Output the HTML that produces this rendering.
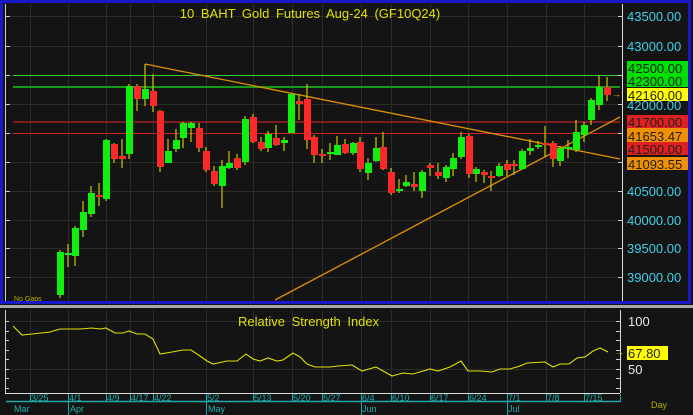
<!DOCTYPE html>
<html><head><meta charset="utf-8"><style>
html,body{margin:0;padding:0;background:#141414;}
svg{display:block;font-family:"Liberation Sans",sans-serif;}
</style></head><body>
<svg width="693" height="415" viewBox="0 0 693 415" xmlns="http://www.w3.org/2000/svg">
<rect width="693" height="415" fill="#141414"/>
<g stroke="#2c2c2c" stroke-width="1">
<line x1="8" y1="16.5" x2="620" y2="16.5"/><line x1="8" y1="46.5" x2="620" y2="46.5"/><line x1="8" y1="75.5" x2="620" y2="75.5"/><line x1="8" y1="104.5" x2="620" y2="104.5"/><line x1="8" y1="133.5" x2="620" y2="133.5"/><line x1="8" y1="162.5" x2="620" y2="162.5"/><line x1="8" y1="191.5" x2="620" y2="191.5"/><line x1="8" y1="220.5" x2="620" y2="220.5"/><line x1="8" y1="248.5" x2="620" y2="248.5"/><line x1="8" y1="277.5" x2="620" y2="277.5"/>
<line x1="30.5" y1="4" x2="30.5" y2="302"/><line x1="68.5" y1="4" x2="68.5" y2="302"/><line x1="106.5" y1="4" x2="106.5" y2="302"/><line x1="130.5" y1="4" x2="130.5" y2="302"/><line x1="153.5" y1="4" x2="153.5" y2="302"/><line x1="206.5" y1="4" x2="206.5" y2="302"/><line x1="253.5" y1="4" x2="253.5" y2="302"/><line x1="292.5" y1="4" x2="292.5" y2="302"/><line x1="322.5" y1="4" x2="322.5" y2="302"/><line x1="361.5" y1="4" x2="361.5" y2="302"/><line x1="391.5" y1="4" x2="391.5" y2="302"/><line x1="430.5" y1="4" x2="430.5" y2="302"/><line x1="468.5" y1="4" x2="468.5" y2="302"/><line x1="507.5" y1="4" x2="507.5" y2="302"/><line x1="546.5" y1="4" x2="546.5" y2="302"/><line x1="584.5" y1="4" x2="584.5" y2="302"/>
</g>
<g stroke="#2c2c2c"><line x1="30.5" y1="310" x2="30.5" y2="393"/><line x1="68.5" y1="310" x2="68.5" y2="393"/><line x1="106.5" y1="310" x2="106.5" y2="393"/><line x1="130.5" y1="310" x2="130.5" y2="393"/><line x1="153.5" y1="310" x2="153.5" y2="393"/><line x1="206.5" y1="310" x2="206.5" y2="393"/><line x1="253.5" y1="310" x2="253.5" y2="393"/><line x1="292.5" y1="310" x2="292.5" y2="393"/><line x1="322.5" y1="310" x2="322.5" y2="393"/><line x1="361.5" y1="310" x2="361.5" y2="393"/><line x1="391.5" y1="310" x2="391.5" y2="393"/><line x1="430.5" y1="310" x2="430.5" y2="393"/><line x1="468.5" y1="310" x2="468.5" y2="393"/><line x1="507.5" y1="310" x2="507.5" y2="393"/><line x1="546.5" y1="310" x2="546.5" y2="393"/><line x1="584.5" y1="310" x2="584.5" y2="393"/>
<line x1="6" y1="321.5" x2="620" y2="321.5"/><line x1="6" y1="369.5" x2="620" y2="369.5"/></g>

<line x1="13" y1="75.5" x2="620" y2="75.5" stroke="#30d030" stroke-width="1"/>
<line x1="13" y1="87" x2="620" y2="87" stroke="#189818" stroke-width="2"/>
<line x1="13" y1="122" x2="620" y2="122" stroke="#a02020" stroke-width="1.5"/>
<line x1="13" y1="133.5" x2="620" y2="133.5" stroke="#d02020" stroke-width="1"/>
<line x1="145" y1="64" x2="620" y2="159" stroke="#e09000" stroke-width="1.3"/>
<line x1="275" y1="300" x2="620" y2="117" stroke="#e09000" stroke-width="1.3"/>

<g stroke="#c8c800" stroke-width="1.2">
<line x1="60" y1="250" x2="60" y2="298"/><line x1="68" y1="244" x2="68" y2="267"/><line x1="75" y1="226" x2="75" y2="266"/><line x1="83" y1="201" x2="83" y2="237"/><line x1="91" y1="186" x2="91" y2="217"/><line x1="99" y1="183" x2="99" y2="206"/><line x1="106" y1="139" x2="106" y2="201"/><line x1="114" y1="143" x2="114" y2="163"/><line x1="122" y1="139" x2="122" y2="168"/><line x1="129" y1="84" x2="129" y2="159"/><line x1="137" y1="84" x2="137" y2="111"/><line x1="145" y1="64" x2="145" y2="106"/><line x1="153" y1="74" x2="153" y2="112"/><line x1="160" y1="110" x2="160" y2="172"/><line x1="168" y1="139" x2="168" y2="163"/><line x1="176" y1="129" x2="176" y2="152"/><line x1="183" y1="122" x2="183" y2="148"/><line x1="191" y1="122" x2="191" y2="142"/><line x1="199" y1="123" x2="199" y2="152"/><line x1="206" y1="147" x2="206" y2="172"/><line x1="214" y1="166" x2="214" y2="186"/><line x1="222" y1="160" x2="222" y2="208"/><line x1="229" y1="151" x2="229" y2="169"/><line x1="237" y1="154" x2="237" y2="170"/><line x1="245" y1="116" x2="245" y2="165"/><line x1="253" y1="114" x2="253" y2="143"/><line x1="261" y1="137" x2="261" y2="151"/><line x1="268" y1="131" x2="268" y2="152"/><line x1="276" y1="125" x2="276" y2="146"/><line x1="284" y1="137" x2="284" y2="151"/><line x1="291" y1="94" x2="291" y2="133"/><line x1="299" y1="94" x2="299" y2="120"/><line x1="307" y1="84" x2="307" y2="149"/><line x1="314" y1="135" x2="314" y2="163"/><line x1="322" y1="149" x2="322" y2="163"/><line x1="330" y1="143" x2="330" y2="160"/><line x1="337" y1="136" x2="337" y2="155"/><line x1="345" y1="139" x2="345" y2="154"/><line x1="353" y1="142" x2="353" y2="155"/><line x1="360" y1="137" x2="360" y2="172"/><line x1="368" y1="158" x2="368" y2="180"/><line x1="376" y1="137" x2="376" y2="162"/><line x1="383" y1="132" x2="383" y2="170"/><line x1="391" y1="168" x2="391" y2="195"/><line x1="399" y1="179" x2="399" y2="193"/><line x1="406" y1="175" x2="406" y2="187"/><line x1="414" y1="172" x2="414" y2="191"/><line x1="422" y1="170" x2="422" y2="198"/><line x1="430" y1="163" x2="430" y2="176"/><line x1="438" y1="163" x2="438" y2="179"/><line x1="446" y1="165" x2="446" y2="182"/><line x1="453" y1="153" x2="453" y2="176"/><line x1="461" y1="132" x2="461" y2="159"/><line x1="469" y1="134" x2="469" y2="178"/><line x1="476" y1="167" x2="476" y2="182"/><line x1="484" y1="170" x2="484" y2="183"/><line x1="491" y1="171" x2="491" y2="191"/><line x1="499" y1="163" x2="499" y2="177"/><line x1="507" y1="160" x2="507" y2="176"/><line x1="514" y1="160" x2="514" y2="175"/><line x1="522" y1="149" x2="522" y2="170"/><line x1="530" y1="139" x2="530" y2="155"/><line x1="538" y1="141" x2="538" y2="149"/><line x1="545" y1="126" x2="545" y2="157"/><line x1="553" y1="141" x2="553" y2="167"/><line x1="560" y1="146" x2="560" y2="166"/><line x1="568" y1="140" x2="568" y2="158"/><line x1="576" y1="120" x2="576" y2="152"/><line x1="584" y1="122" x2="584" y2="142"/><line x1="591" y1="98" x2="591" y2="125"/><line x1="599" y1="75" x2="599" y2="110"/><line x1="607" y1="77" x2="607" y2="101"/>
</g>
<g fill="#10f010">
<rect x="57" y="252" width="7" height="43"/><rect x="65" y="253" width="7" height="2"/><rect x="72" y="228" width="7" height="28"/><rect x="80" y="212" width="7" height="18"/><rect x="88" y="193" width="7" height="21"/><rect x="103" y="140" width="7" height="59"/><rect x="126" y="86" width="7" height="68"/><rect x="142" y="89" width="7" height="10"/><rect x="165" y="151" width="7" height="12"/><rect x="173" y="140" width="7" height="9"/><rect x="180" y="123" width="7" height="15"/><rect x="188" y="123" width="7" height="5"/><rect x="219" y="166" width="7" height="20"/><rect x="226" y="163" width="7" height="5"/><rect x="242" y="119" width="7" height="43"/><rect x="265" y="134" width="7" height="14"/><rect x="281" y="140" width="7" height="3"/><rect x="288" y="94" width="7" height="39"/><rect x="327" y="152" width="7" height="2"/><rect x="334" y="145" width="7" height="10"/><rect x="350" y="143" width="7" height="10"/><rect x="365" y="163" width="7" height="10"/><rect x="373" y="148" width="7" height="13"/><rect x="396" y="189" width="7" height="2"/><rect x="403" y="182" width="7" height="4"/><rect x="419" y="172" width="7" height="19"/><rect x="443" y="167" width="7" height="11"/><rect x="450" y="158" width="7" height="11"/><rect x="458" y="137" width="7" height="20"/><rect x="473" y="169" width="7" height="5"/><rect x="496" y="166" width="7" height="10"/><rect x="519" y="151" width="7" height="18"/><rect x="527" y="148" width="7" height="3"/><rect x="535" y="145" width="7" height="2"/><rect x="557" y="148" width="7" height="13"/><rect x="565" y="147" width="7" height="2"/><rect x="573" y="132" width="7" height="18"/><rect x="581" y="125" width="7" height="10"/><rect x="588" y="100" width="7" height="20"/><rect x="596" y="87" width="7" height="18"/>
</g>
<g fill="#ff2828">
<rect x="96" y="195" width="7" height="2"/><rect x="111" y="144" width="7" height="15"/><rect x="119" y="156" width="7" height="3"/><rect x="134" y="86" width="7" height="13"/><rect x="150" y="91" width="7" height="15"/><rect x="157" y="111" width="7" height="56"/><rect x="196" y="128" width="7" height="20"/><rect x="203" y="151" width="7" height="19"/><rect x="211" y="171" width="7" height="13"/><rect x="234" y="158" width="7" height="10"/><rect x="250" y="117" width="7" height="25"/><rect x="258" y="142" width="7" height="7"/><rect x="273" y="138" width="7" height="7"/><rect x="296" y="101" width="7" height="3"/><rect x="304" y="99" width="7" height="41"/><rect x="311" y="137" width="7" height="18"/><rect x="319" y="154" width="7" height="2"/><rect x="342" y="144" width="7" height="9"/><rect x="357" y="142" width="7" height="27"/><rect x="380" y="147" width="7" height="22"/><rect x="388" y="172" width="7" height="21"/><rect x="411" y="184" width="7" height="3"/><rect x="427" y="165" width="7" height="3"/><rect x="435" y="172" width="7" height="4"/><rect x="466" y="136" width="7" height="38"/><rect x="481" y="172" width="7" height="3"/><rect x="488" y="176" width="7" height="2"/><rect x="504" y="164" width="7" height="6"/><rect x="511" y="164" width="7" height="2"/><rect x="542" y="143" width="7" height="2"/><rect x="550" y="143" width="7" height="16"/><rect x="604" y="87" width="7" height="8"/>
</g>

<text x="310" y="18" fill="#e0e000" font-size="13" text-anchor="middle" word-spacing="3">10 BAHT Gold Futures Aug-24 (GF10Q24)</text>
<text x="14" y="301" fill="#b0b000" font-size="7">No Gaps</text>

<line x1="5.5" y1="4" x2="5.5" y2="302" stroke="#ccc"/>
<line x1="622.5" y1="4" x2="622.5" y2="302" stroke="#ddd"/>
<g stroke="#ccc">
<line x1="5" y1="16.5" x2="10" y2="16.5"/><line x1="5" y1="46.5" x2="10" y2="46.5"/><line x1="5" y1="75.5" x2="10" y2="75.5"/><line x1="5" y1="104.5" x2="10" y2="104.5"/><line x1="5" y1="133.5" x2="10" y2="133.5"/><line x1="5" y1="162.5" x2="10" y2="162.5"/><line x1="5" y1="191.5" x2="10" y2="191.5"/><line x1="5" y1="220.5" x2="10" y2="220.5"/><line x1="5" y1="248.5" x2="10" y2="248.5"/><line x1="5" y1="277.5" x2="10" y2="277.5"/>
<line x1="618" y1="16.5" x2="623" y2="16.5"/><line x1="618" y1="46.5" x2="623" y2="46.5"/><line x1="618" y1="75.5" x2="623" y2="75.5"/><line x1="618" y1="104.5" x2="623" y2="104.5"/><line x1="618" y1="133.5" x2="623" y2="133.5"/><line x1="618" y1="162.5" x2="623" y2="162.5"/><line x1="618" y1="191.5" x2="623" y2="191.5"/><line x1="618" y1="220.5" x2="623" y2="220.5"/><line x1="618" y1="248.5" x2="623" y2="248.5"/><line x1="618" y1="277.5" x2="623" y2="277.5"/>
</g>
<g font-size="13" fill="#40d0e8">
<text x="627" y="21">43500.00</text><text x="627" y="51">43000.00</text><text x="627" y="110">42000.00</text><text x="627" y="196">40500.00</text><text x="627" y="225">40000.00</text><text x="627" y="253">39500.00</text><text x="627" y="282">39000.00</text>
</g>
<rect x="627" y="61" width="61" height="13" fill="#00e000"/>
<rect x="627" y="74" width="61" height="13" fill="#00e000"/>
<rect x="627" y="88" width="61" height="13" fill="#ffff00"/>
<rect x="627" y="115" width="61" height="13" fill="#e02020"/>
<rect x="627" y="128" width="61" height="14" fill="#f09000"/>
<rect x="627" y="142" width="61" height="13" fill="#e02020"/>
<rect x="627" y="157" width="61" height="13" fill="#f09000"/>
<g font-size="13" fill="#202020">
<text x="628" y="73">42500.00</text><text x="628" y="86">42300.00</text><text x="628" y="100">42160.00</text><text x="628" y="127">41700.00</text><text x="628" y="141">41653.47</text><text x="628" y="154">41500.00</text><text x="628" y="169">41093.55</text>
</g>
<text x="612" y="97" fill="#e0c000" font-size="9">→</text>

<rect x="1.5" y="1.5" width="688" height="301" fill="none" stroke="#1818c8" stroke-width="3"/>
<rect x="0" y="305" width="693" height="3" fill="#a8a8a8"/>

<line x1="5.5" y1="310" x2="5.5" y2="393" stroke="#ccc"/>
<line x1="5" y1="393.5" x2="620" y2="393.5" stroke="#ddd"/>
<line x1="620.5" y1="310" x2="620.5" y2="393" stroke="#ddd"/>
<g stroke="#ccc"><line x1="5" y1="321.5" x2="9" y2="321.5"/><line x1="5" y1="331.5" x2="9" y2="331.5"/><line x1="5" y1="340.5" x2="9" y2="340.5"/><line x1="5" y1="350.5" x2="9" y2="350.5"/><line x1="5" y1="359.5" x2="9" y2="359.5"/><line x1="5" y1="369.5" x2="9" y2="369.5"/><line x1="5" y1="378.5" x2="9" y2="378.5"/><line x1="5" y1="388.5" x2="9" y2="388.5"/>
<line x1="616" y1="321.5" x2="620" y2="321.5"/><line x1="616" y1="331.5" x2="620" y2="331.5"/><line x1="616" y1="340.5" x2="620" y2="340.5"/><line x1="616" y1="350.5" x2="620" y2="350.5"/><line x1="616" y1="359.5" x2="620" y2="359.5"/><line x1="616" y1="369.5" x2="620" y2="369.5"/><line x1="616" y1="378.5" x2="620" y2="378.5"/><line x1="616" y1="388.5" x2="620" y2="388.5"/></g>
<text x="238" y="326" fill="#e0e000" font-size="13" word-spacing="3">Relative Strength Index</text>
<polyline fill="none" stroke="#e0e000" stroke-width="1.1" points="13,326 22,335 32,334 50,332 60,329 80,329 92,328 100,329 106,328 115,333 123,333 129,331 137,334 145,334 153,339 160,354 172,352 183,350 191,350 200,356 207,361 213,364 227,361 237,361 246,354 253,359 260,361 268,358 277,361 283,360 293,353 300,357 307,364 315,367 330,367 338,366 352,365 362,371 376,367 392,376 403,373 413,374 430,369 438,371 450,367 461,361 468,371 480,371 492,372 500,369 510,369 520,366 527,363 545,362 553,367 560,364 569,364 577,358 585,357 593,351 600,348 608,352"/>
<text x="628" y="326" fill="#e8e8e8" font-size="13">100</text>
<text x="628" y="374" fill="#e8e8e8" font-size="13">50</text>
<rect x="627" y="346" width="41" height="14" fill="#ffff00"/>
<text x="628" y="358" fill="#202020" font-size="13">67.80</text>
<text x="615" y="355" fill="#e0c000" font-size="9">→</text>

<line x1="6" y1="401.5" x2="620" y2="401.5" stroke="#20a8a8" stroke-width="1.5"/>
<g stroke="#20a8a8"><line x1="30.5" y1="394" x2="30.5" y2="402"/><line x1="68.5" y1="394" x2="68.5" y2="415"/><line x1="106.5" y1="394" x2="106.5" y2="402"/><line x1="130.5" y1="394" x2="130.5" y2="402"/><line x1="153.5" y1="394" x2="153.5" y2="402"/><line x1="206.5" y1="394" x2="206.5" y2="415"/><line x1="253.5" y1="394" x2="253.5" y2="402"/><line x1="292.5" y1="394" x2="292.5" y2="402"/><line x1="322.5" y1="394" x2="322.5" y2="402"/><line x1="361.5" y1="394" x2="361.5" y2="415"/><line x1="391.5" y1="394" x2="391.5" y2="402"/><line x1="430.5" y1="394" x2="430.5" y2="402"/><line x1="468.5" y1="394" x2="468.5" y2="402"/><line x1="507.5" y1="394" x2="507.5" y2="415"/><line x1="546.5" y1="394" x2="546.5" y2="402"/><line x1="584.5" y1="394" x2="584.5" y2="402"/><line x1="620.5" y1="394" x2="620.5" y2="402"/></g>
<g font-size="9" fill="#20b0b0">
<text x="31" y="401">3/25</text><text x="69" y="401">4/1</text><text x="107" y="401">4/9</text><text x="131" y="401">4/17</text><text x="154" y="401">4/22</text><text x="207" y="401">5/2</text><text x="254" y="401">5/13</text><text x="293" y="401">5/20</text><text x="323" y="401">5/27</text><text x="362" y="401">6/4</text><text x="392" y="401">6/10</text><text x="431" y="401">6/17</text><text x="469" y="401">6/24</text><text x="508" y="401">7/1</text><text x="547" y="401">7/8</text><text x="585" y="401">7/15</text>
<text x="14" y="412">Mar</text><text x="70" y="412">Apr</text><text x="208" y="412">May</text><text x="362" y="412">Jun</text><text x="508" y="412">Jul</text>
</g>
<text x="651" y="408" fill="#b0b000" font-size="9">Day</text>
</svg>
</body></html>
